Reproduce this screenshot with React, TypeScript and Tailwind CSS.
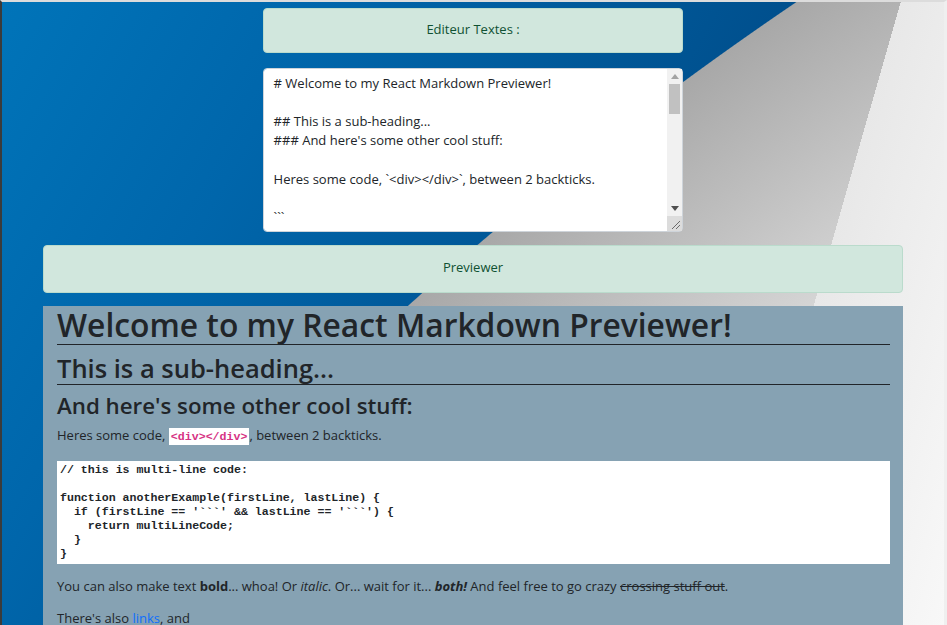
const markdown = [
  "# Welcome to my React Markdown Previewer!",
  "",
  "## This is a sub-heading...",
  "### And here's some other cool stuff:",
  "",
  "Heres some code, `<div></div>`, between 2 backticks.",
  "",
  "```",
  "// this is multi-line code:",
  "",
  "function anotherExample(firstLine, lastLine) {",
  "  if (firstLine == '```' && lastLine == '```') {",
  "    return multiLineCode;",
  "  }",
  "}",
  "```",
  "",
  "You can also make text **bold**... whoa!",
  "Or _italic_.",
  "Or... wait for it... **_both!_**",
  "And feel free to go crazy ~~crossing stuff out~~.",
  "",
  "There's also [links](https://www.freecodecamp.org), and",
  "> Block Quotes!",
].join("\n");

const codeBlock = `// this is multi-line code:

function anotherExample(firstLine, lastLine) {
  if (firstLine == '\`\`\`' && lastLine == '\`\`\`') {
    return multiLineCode;
  }
}`;

function FakeScrollbar() {
  return (
    <div className="absolute bottom-[1px] right-[1px] top-[1px] flex w-[15px] flex-col bg-[#f1f1f1]">
      <div className="flex h-[15px] items-center justify-center">
        <svg width="8" height="5" viewBox="0 0 8 5">
          <polygon points="0,5 8,5 4,0" fill="#a3a3a3" />
        </svg>
      </div>
      <div className="mx-[2px] h-[30px] bg-[#c1c1c1]" />
      <div className="flex-1" />
      <div className="flex h-[15px] items-center justify-center">
        <svg width="8" height="5" viewBox="0 0 8 5">
          <polygon points="0,0 8,0 4,5" fill="#505050" />
        </svg>
      </div>
      <div className="flex h-[15px] items-end justify-end bg-[#dcdcdc] p-[2px]">
        <svg width="9" height="9" viewBox="0 0 9 9">
          <line x1="1" y1="9" x2="9" y2="1" stroke="#6b6b6b" strokeWidth="1" />
          <line x1="5" y1="9" x2="9" y2="5" stroke="#6b6b6b" strokeWidth="1" />
        </svg>
      </div>
    </div>
  );
}

export default function App() {
  return (
    <div className="h-[625px] overflow-hidden border-t-2 border-l-2 border-r-[3px] border-t-[#dcdcdc] border-l-[#3b3b3b] border-r-[#efefef] bg-[linear-gradient(106deg,transparent_80.2%,#e8e8e8_80.2%,#f8f8f8),radial-gradient(circle_at_2817px_2986px,#e4e4e4_3150px,#d6d6d6_3342px,#a8a8a8_3606px,transparent_3607px),linear-gradient(120deg,#0074b9,#0066ab_25%,#00508e_60%)] font-['Open_Sans',sans-serif] text-[#212529]">
      <div className="flex flex-col items-center pt-[6px]">
        <div className="flex h-[45px] w-[420px] items-center justify-center rounded-[4px] border border-[#badbcc] bg-[#d1e7dd] pb-[1px] text-[13px] text-[#0f5132]">
          Editeur Textes :
        </div>

        <div className="relative mt-[15px] h-[164px] w-[420px]">
          <textarea
            defaultValue={markdown}
            className="h-full w-full resize-none rounded-[4px] border border-[#ced4da] bg-white py-[4.8px] pl-[9.6px] pr-[20px] text-[13px] leading-[19.2px] text-[#212529] outline-none [scrollbar-width:none]"
          />
          <FakeScrollbar />
        </div>

        <div className="mt-[13px] flex h-[48px] w-[860px] items-center justify-center rounded-[4px] border border-[#badbcc] bg-[#d1e7dd] pb-[2px] text-[13px] text-[#0f5132]">
          Previewer
        </div>

        <div className="mt-[13px] w-[860px] bg-[#86a2b3] pl-[14px] pr-[13px]">
          <h1 className="border-b border-[#212529] text-[31.8px] font-semibold leading-[38px]">
            Welcome to my React Markdown Previewer!
          </h1>
          <h2 className="mt-[8px] border-b border-[#212529] text-[25.5px] font-semibold leading-[31px]">
            This is a sub-heading...
          </h2>
          <h3 className="mt-[7px] text-[22.3px] font-semibold leading-[27px]">And here's some other cool stuff:</h3>
          <p className="mt-[6.5px] text-[13px] leading-[19.2px]">
            Heres some code,{" "}
            <code className="bg-white px-[2px] py-[2px] font-['Liberation_Mono',monospace] text-[11.6px] font-bold text-[#d63384]">
              {"<div></div>"}
            </code>
            , between 2 backticks.
          </p>
          <pre className="mt-[15px] bg-white pb-[3px] pl-[3px] pt-[2px] font-['Liberation_Mono',monospace] text-[11.6px] font-bold leading-[14px] text-[#212529]">
            {codeBlock}
          </pre>
          <p className="mt-[13px] text-[13px] leading-[19.2px]">
            You can also make text <strong>bold</strong>... whoa! Or <em>italic</em>. Or... wait for it...{" "}
            <strong>
              <em>both!</em>
            </strong>{" "}
            And feel free to go crazy <del>crossing stuff out</del>.
          </p>
          <p className="mt-[13px] text-[13px] leading-[19.2px]">
            There's also <a className="text-[#0d6efd]">links</a>, and
          </p>
          <blockquote className="mt-[13px] border-l-4 border-[#6c757d] pl-3 text-[13px]">
            <p>Block Quotes!</p>
          </blockquote>
          <div className="h-[120px]" />
        </div>
      </div>
    </div>
  );
}
